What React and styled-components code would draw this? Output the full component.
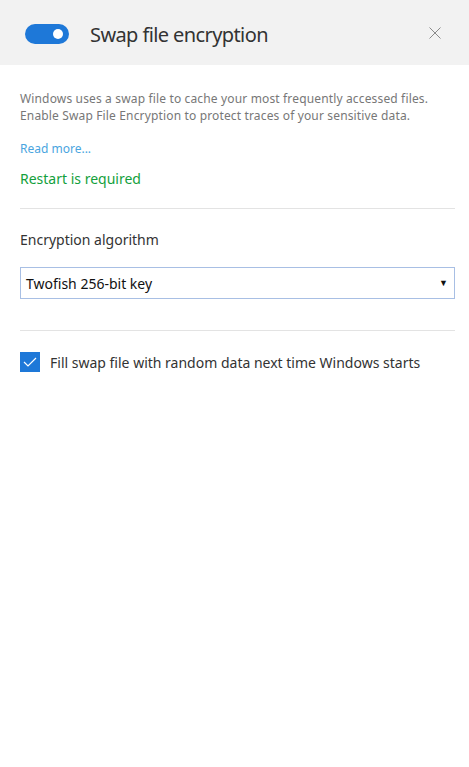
import React, { useState } from "react";
import styled, { createGlobalStyle } from "styled-components";

const GlobalStyle = createGlobalStyle`
  html, body {
    margin: 0;
    padding: 0;
    background: #ffffff;
  }
  body {
    font-family: "Segoe UI", "Noto Sans", "Open Sans", sans-serif;
  }
`;

const Panel = styled.div`
  width: 469px;
  height: 767px;
  background: #ffffff;
  display: flex;
  flex-direction: column;
`;

const Header = styled.div`
  height: 65px;
  background: #f2f2f2;
  display: flex;
  align-items: center;
  padding: 2px 28px 0 25px;
  box-sizing: border-box;
`;

const Toggle = styled.div`
  width: 44px;
  height: 20px;
  border-radius: 10px;
  background: ${p => (p.on ? "#1e78d8" : "#bdbdbd")};
  display: flex;
  align-items: center;
  justify-content: ${p => (p.on ? "flex-end" : "flex-start")};
  padding: 0 6px;
  box-sizing: border-box;
  cursor: pointer;
  flex-shrink: 0;
`;

const Knob = styled.div`
  width: 10px;
  height: 10px;
  border-radius: 50%;
  background: #ffffff;
`;

const Title = styled.h1`
  flex: 1;
  margin: 1px 0 0 21px;
  font-size: 20px;
  font-weight: 400;
  color: #333333;
  letter-spacing: -0.6px;
`;

const CloseButton = styled.button`
  border: none;
  background: transparent;
  padding: 0;
  width: 12px;
  height: 12px;
  display: flex;
  margin-top: -2px;
  cursor: pointer;
`;

const Body = styled.div`
  padding: 25px 14px 0 20px;
  display: flex;
  flex-direction: column;
`;

const Description = styled.p`
  margin: 0;
  font-size: 12px;
  line-height: 17px;
  letter-spacing: 0.15px;
  color: #777777;
`;

const Link = styled.a`
  margin-top: 16px;
  font-size: 12px;
  line-height: 17px;
  color: #4aa5e0;
  text-decoration: none;
`;

const Status = styled.div`
  margin-top: 12px;
  font-size: 14px;
  line-height: 20px;
  color: #13a03c;
`;

const Divider = styled.hr`
  border: none;
  border-top: 1px solid #e3e3e3;
  margin: ${p => p.space || "20px"} 0 0;
  width: 100%;
`;

const Label = styled.div`
  margin-top: 21px;
  font-size: 14px;
  line-height: 20px;
  color: #333333;
`;

const Select = styled.div`
  margin-top: 17px;
  height: 32px;
  border: 1px solid #a8bfe4;
  box-sizing: border-box;
  display: flex;
  align-items: center;
  justify-content: space-between;
  padding: 0 6px 0 5px;
  font-size: 14px;
  color: #111111;
`;

const Arrow = styled.span`
  font-size: 9px;
  color: #111111;
  margin-top: -1px;
`;

const CheckRow = styled.label`
  margin-top: 21px;
  display: flex;
  align-items: center;
  gap: 10px;
  font-size: 14px;
  color: #333333;
  cursor: pointer;
`;

const CheckBox = styled.span`
  width: 20px;
  height: 20px;
  background: ${p => (p.checked ? "#1e78d8" : "#ffffff")};
  display: flex;
  align-items: center;
  justify-content: center;
  flex-shrink: 0;
`;

export default function App() {
  const [enabled, setEnabled] = useState(true);
  const [fill, setFill] = useState(true);

  return (
    <>
      <GlobalStyle />
      <Panel>
        <Header>
          <Toggle on={enabled ? 1 : 0} onClick={() => setEnabled(!enabled)}>
            <Knob />
          </Toggle>
          <Title>Swap file encryption</Title>
          <CloseButton aria-label="Close">
            <svg width="12" height="12" viewBox="0 0 12 12">
              <path d="M0.5 0.5 L11.5 11.5 M11.5 0.5 L0.5 11.5" stroke="#8a8a8a" strokeWidth="1" />
            </svg>
          </CloseButton>
        </Header>
        <Body>
          <Description>
            Windows uses a swap file to cache your most frequently accessed files.
            <br />
            Enable Swap File Encryption to protect traces of your sensitive data.
          </Description>
          <Link href="#">Read more...</Link>
          <Status>Restart is required</Status>
          <Divider space="19px" />
          <Label>Encryption algorithm</Label>
          <Select>
            <span>Twofish 256-bit key</span>
            <Arrow>▼</Arrow>
          </Select>
          <Divider space="31px" />
          <CheckRow onClick={() => setFill(!fill)}>
            <CheckBox checked={fill}>
              {fill && (
                <svg width="14" height="10" viewBox="0 0 14 10">
                  <path d="M1 5 L5 9 L13 1" fill="none" stroke="#ffffff" strokeWidth="1.2" />
                </svg>
              )}
            </CheckBox>
            Fill swap file with random data next time Windows starts
          </CheckRow>
        </Body>
      </Panel>
    </>
  );
}
